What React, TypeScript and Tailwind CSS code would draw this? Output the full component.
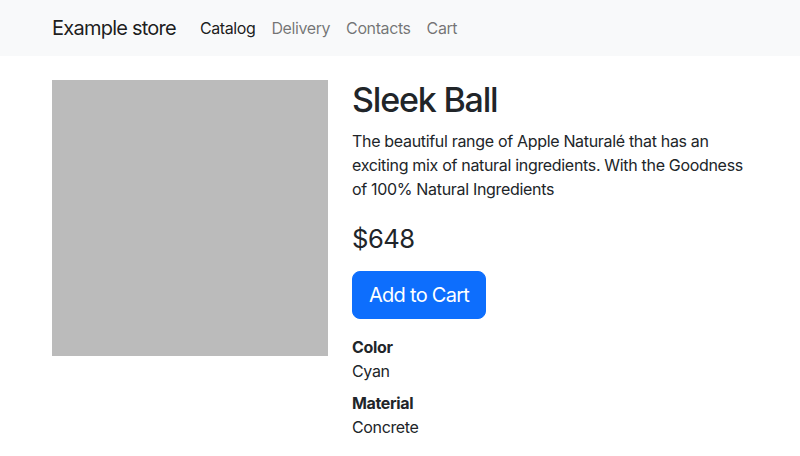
import React from "react";

export default function App() {
  return (
    <div className="min-h-[456px] bg-white text-[#212529] font-['Inter',sans-serif] text-base leading-6 tracking-[-0.022em]">
      <nav className="bg-[#f8f9fa] h-14 flex items-center">
        <div className="w-[720px] mx-auto px-3 flex items-center">
          <a className="text-xl leading-[30px] text-black/90 mr-4 py-[5px] tracking-[-0.038em]">Example store</a>
          <ul className="flex tracking-[-0.025em]">
            <li><a className="block px-2 py-2 text-black/90">Catalog</a></li>
            <li><a className="block px-2 py-2 text-black/55">Delivery</a></li>
            <li><a className="block px-2 py-2 text-black/55">Contacts</a></li>
            <li><a className="block px-2 py-2 text-black/55">Cart</a></li>
          </ul>
        </div>
      </nav>
      <main className="w-[720px] mx-auto px-3 mt-6">
        <div className="flex -mx-3">
          <div className="w-[300px] px-3 shrink-0">
            <div className="w-[276px] h-[276px] bg-[#bbbbbb]"></div>
          </div>
          <div className="w-[420px] px-3">
            <h1 className="text-[34px] leading-[40.8px] font-medium mb-2 tracking-[-0.035em]">Sleek Ball</h1>
            <p className="mb-[23px] tracking-[-0.02em]">
              The beautiful range of Apple Naturalé that has an exciting mix of natural ingredients. With the Goodness of 100% Natural Ingredients
            </p>
            <div className="text-[25.6px] leading-[30.7px] mb-4 tracking-[-0.02em]">$648</div>
            <button className="bg-[#0d6efd] text-white text-xl leading-[30px] px-4 py-2 border border-[#0d6efd] rounded-lg tracking-[-0.036em]">
              Add to Cart
            </button>
            <dl className="mt-4">
              <dt className="font-bold">Color</dt>
              <dd className="mb-2">Cyan</dd>
              <dt className="font-bold">Material</dt>
              <dd className="mb-2">Concrete</dd>
            </dl>
          </div>
        </div>
      </main>
    </div>
  );
}
